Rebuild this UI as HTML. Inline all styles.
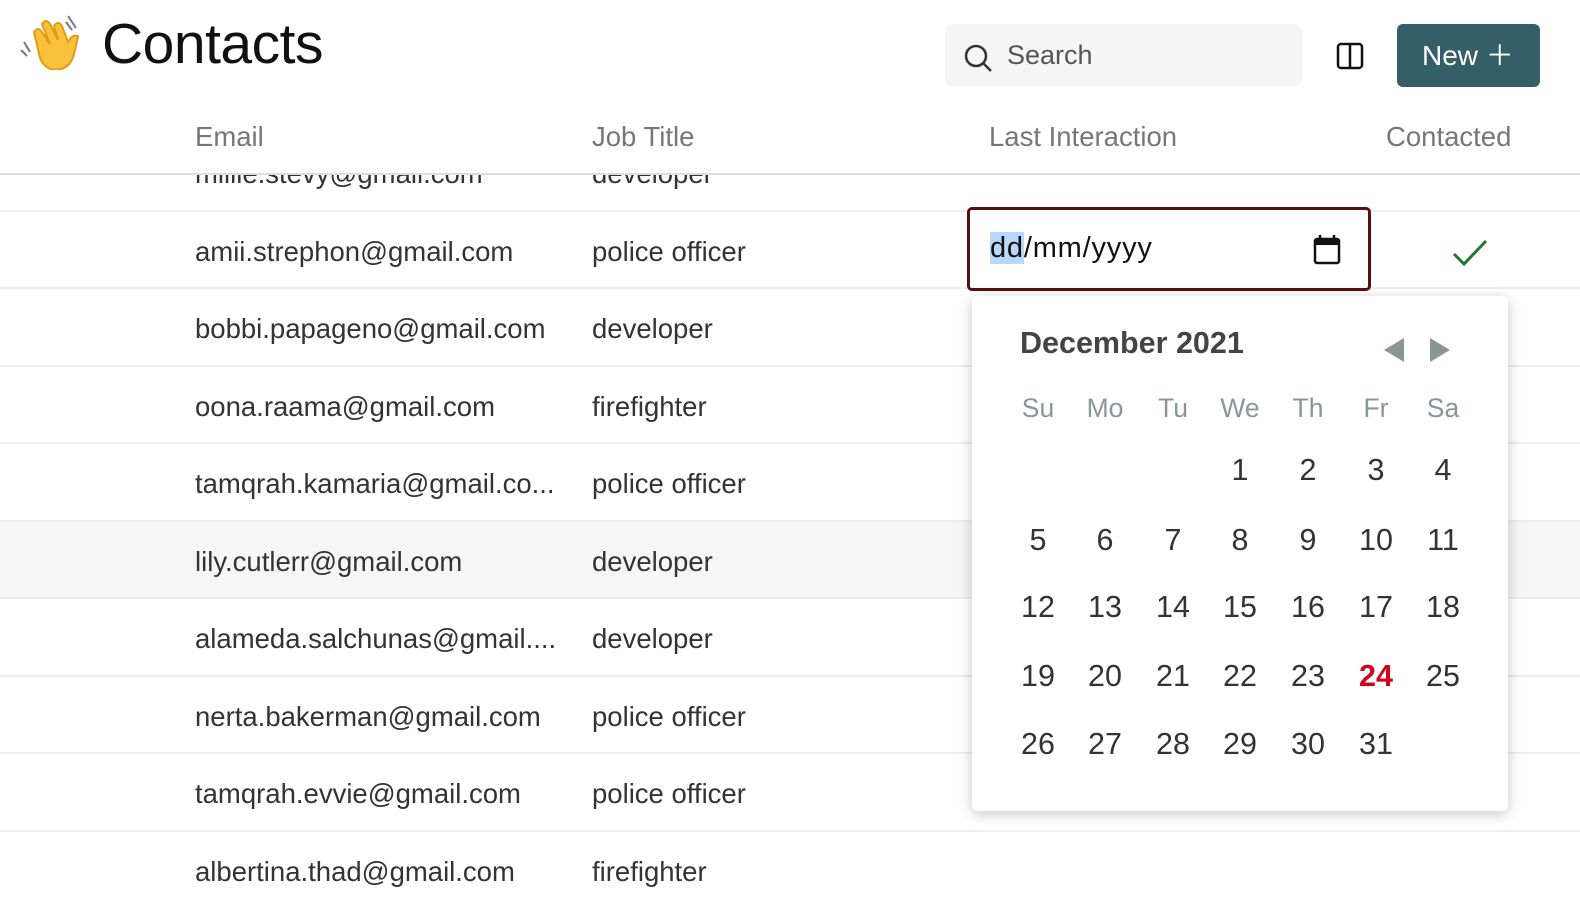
<!DOCTYPE html>
<html><head><meta charset="utf-8"><style>
*{margin:0;padding:0;box-sizing:border-box}
body{width:1580px;height:912px;overflow:hidden;background:#fff;font-family:"Liberation Sans",sans-serif;color:#333;position:relative}
.abs{position:absolute}
.title{left:102px;top:11px;font-size:57px;color:#111;letter-spacing:-0.5px}
.search{left:945px;top:24px;width:357px;height:63px;background:#f4f5f4;border-radius:8px}
.search span{position:absolute;left:62px;top:16px;font-size:27px;color:#555}
.newbtn{left:1397px;top:24px;width:143px;height:63px;background:#355f68;border-radius:6px;color:#fff;font-size:28px;line-height:63px;padding-left:25px}
.th{top:121px;font-size:27.5px;color:#777}
.hdrline{left:0;top:173px;width:1580px;height:2px;background:#ddd}
.body{left:0;top:175px;width:1580px;height:737px;overflow:hidden}
.row{position:absolute;left:0;width:1580px;height:77.5px;border-bottom:2px solid #eee;font-size:27.5px}
.row div{position:absolute;top:24px}
.c1{left:195px}.c2{left:592px}
.date{left:967px;top:207px;width:404px;height:84px;border:3px solid #5a0e10;border-radius:5px;background:#fff}
.date span{position:absolute;left:20px;top:22px;font-size:29px;color:#111;letter-spacing:0.8px}
.cal{left:972px;top:296px;width:536px;height:515px;background:#fff;border-radius:6px;box-shadow:0 3px 14px rgba(0,0,0,.22)}
.mon{position:absolute;left:48px;top:30px;font-size:30.5px;font-weight:bold;color:#444}
.g{position:absolute;width:60px;text-align:center;transform:translateX(-30px)}
.dh{font-size:26.5px;color:#8a9696;top:97px}
.dn{font-size:30.5px;color:#333}
</style></head><body>
<svg class="abs" style="left:20px;top:12px" width="62" height="58" viewBox="0 0 62 58">
<path d="M10 40 L4 30 M7 44 L1 38" stroke="#777" stroke-width="2" fill="none"/>
<path d="M48 4 L56 16 M46 10 L52 18" stroke="#777" stroke-width="2" fill="none"/>
<path d="M14 20 Q18 14 22 20 L30 32 L22 12 Q26 6 30 12 L38 28 L34 14 Q38 8 42 14 L48 30 Q52 22 58 24 Q56 34 54 42 Q50 58 34 58 Q24 56 20 46 Z" fill="#f7c23a" stroke="#e39a1a" stroke-width="2"/>
</svg>
<div class="abs title">Contacts</div>
<div class="abs search"><svg style="position:absolute;left:18px;top:19px" width="30" height="30" viewBox="0 0 30 30"><circle cx="13" cy="13" r="10" stroke="#333" stroke-width="2.5" fill="none"/><path d="M20.5 20.5 L28 28" stroke="#333" stroke-width="2.5"/></svg><span>Search</span></div>
<svg class="abs" style="left:1336px;top:42px" width="28" height="28" viewBox="0 0 28 28"><rect x="2" y="2" width="24" height="24" rx="3" stroke="#111" stroke-width="2.5" fill="none"/><path d="M14 2 V26" stroke="#111" stroke-width="2.5"/></svg>
<div class="abs newbtn">New ＋</div>
<div class="abs th" style="left:195px">Email</div>
<div class="abs th" style="left:592px">Job Title</div>
<div class="abs th" style="left:989px">Last Interaction</div>
<div class="abs th" style="left:1386px">Contacted</div>
<div class="abs body">
<div class="row" style="top:-41px"><div class="c1">millie.stevy@gmail.com</div><div class="c2">developer</div></div>
<div class="row" style="top:36.5px"><div class="c1">amii.strephon@gmail.com</div><div class="c2">police officer</div><svg style="position:absolute;left:1452px;top:26px" width="36" height="30" viewBox="0 0 36 30"><path d="M2 16 L12 26 L34 3" stroke="#1d7a2a" stroke-width="3" fill="none"/></svg></div>
<div class="row" style="top:114px"><div class="c1">bobbi.papageno@gmail.com</div><div class="c2">developer</div></div>
<div class="row" style="top:191.5px"><div class="c1">oona.raama@gmail.com</div><div class="c2">firefighter</div></div>
<div class="row" style="top:269px"><div class="c1">tamqrah.kamaria@gmail.co...</div><div class="c2">police officer</div></div>
<div class="row" style="top:346.5px;background:#f5f6f5"><div class="c1">lily.cutlerr@gmail.com</div><div class="c2">developer</div></div>
<div class="row" style="top:424px"><div class="c1">alameda.salchunas@gmail....</div><div class="c2">developer</div></div>
<div class="row" style="top:501.5px"><div class="c1">nerta.bakerman@gmail.com</div><div class="c2">police officer</div></div>
<div class="row" style="top:579px"><div class="c1">tamqrah.evvie@gmail.com</div><div class="c2">police officer</div></div>
<div class="row" style="top:656.5px;border:none"><div class="c1">albertina.thad@gmail.com</div><div class="c2">firefighter</div></div>
</div>
<div class="abs date"><span><span style="position:static;background:#b9d6fb">dd</span>/mm/yyyy</span>
<svg style="position:absolute;left:343px;top:24px" width="28" height="32" viewBox="0 0 28 32"><rect x="2" y="5" width="24" height="24" rx="2" stroke="#111" stroke-width="2.5" fill="none"/><rect x="2" y="5" width="24" height="6" fill="#111"/><path d="M7 1 V6 M21 1 V6" stroke="#111" stroke-width="2.5"/></svg></div>
<div class="abs cal">
<div class="mon">December 2021</div>
<svg style="position:absolute;left:410px;top:40px" width="70" height="28" viewBox="0 0 70 28"><path d="M2 14 L22 2 V26 Z M68 14 L48 2 V26 Z" fill="#8a9696"/></svg>
<div class="g dh" style="left:66px">Su</div><div class="g dh" style="left:133px">Mo</div><div class="g dh" style="left:201px">Tu</div><div class="g dh" style="left:268px">We</div><div class="g dh" style="left:336px">Th</div><div class="g dh" style="left:404px">Fr</div><div class="g dh" style="left:471px">Sa</div>
<div class="g dn" style="left:268px;top:157px">1</div><div class="g dn" style="left:336px;top:157px">2</div><div class="g dn" style="left:404px;top:157px">3</div><div class="g dn" style="left:471px;top:157px">4</div>
<div class="g dn" style="left:66px;top:227px">5</div><div class="g dn" style="left:133px;top:227px">6</div><div class="g dn" style="left:201px;top:227px">7</div><div class="g dn" style="left:268px;top:227px">8</div><div class="g dn" style="left:336px;top:227px">9</div><div class="g dn" style="left:404px;top:227px">10</div><div class="g dn" style="left:471px;top:227px">11</div>
<div class="g dn" style="left:66px;top:294px">12</div><div class="g dn" style="left:133px;top:294px">13</div><div class="g dn" style="left:201px;top:294px">14</div><div class="g dn" style="left:268px;top:294px">15</div><div class="g dn" style="left:336px;top:294px">16</div><div class="g dn" style="left:404px;top:294px">17</div><div class="g dn" style="left:471px;top:294px">18</div>
<div class="g dn" style="left:66px;top:363px">19</div><div class="g dn" style="left:133px;top:363px">20</div><div class="g dn" style="left:201px;top:363px">21</div><div class="g dn" style="left:268px;top:363px">22</div><div class="g dn" style="left:336px;top:363px">23</div><div class="g dn" style="left:404px;top:363px;color:#d0021b;font-weight:bold">24</div><div class="g dn" style="left:471px;top:363px">25</div>
<div class="g dn" style="left:66px;top:431px">26</div><div class="g dn" style="left:133px;top:431px">27</div><div class="g dn" style="left:201px;top:431px">28</div><div class="g dn" style="left:268px;top:431px">29</div><div class="g dn" style="left:336px;top:431px">30</div><div class="g dn" style="left:404px;top:431px">31</div>
</div>
<div class="abs hdrline"></div>
</body></html>
